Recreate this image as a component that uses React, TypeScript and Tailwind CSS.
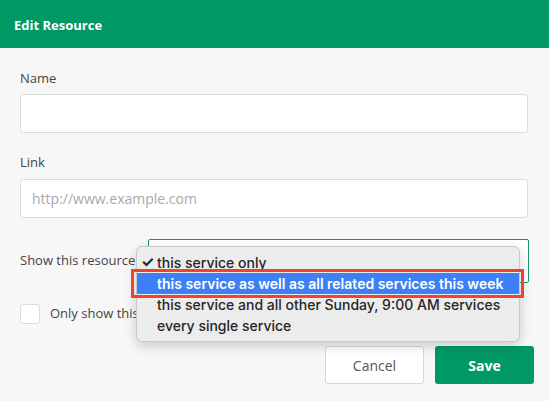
import React from 'react';

const options = [
  'this service only',
  'this service as well as all related services this week',
  'this service and all other Sunday, 9:00 AM services',
  'every single service',
];

const SelectMenu = () => {
  return (
    <div className="absolute left-[116px] top-[7px] w-[384px] rounded-[6px] border border-[#c9c9c9] bg-[#ececec] py-[5px] shadow-[0_4px_12px_rgba(0,0,0,0.18)] font-['Inter',sans-serif] text-[14px] text-[#262626]">
      {options.map((opt, i) => (
        <div
          key={opt}
          className={
            i === 1
              ? 'relative flex h-[21px] items-center bg-[#3d7ff6] pl-[20px] font-semibold text-white'
              : 'relative flex h-[21px] items-center pl-[20px] font-medium'
          }
        >
          {i === 0 && <span className="absolute left-[4px] text-[15px] font-bold">✓</span>}
          {opt}
          {i === 1 && (
            <span className="pointer-events-none absolute -left-[6px] -right-[5px] -top-[4px] -bottom-[4px] border-[3px] border-[#f1412f]" />
          )}
        </div>
      ))}
    </div>
  );
};

export default function App() {
  return (
    <div className="h-[401px] w-[549px] overflow-hidden bg-[#f7f7f7] font-['Open_Sans',sans-serif]">
      <header className="flex h-[48px] items-center bg-[#009966] px-[14px] pt-[3px]">
        <h1 className="text-[13px] font-bold text-white">Edit Resource</h1>
      </header>

      <div className="px-[20px] pt-[21px]">
        <label className="block text-[13px] leading-[18px] text-[#444]">Name</label>
        <div className="mt-[7px] h-[39px] w-[508px] rounded-[3px] border border-[#dcdcdc] bg-white" />

        <label className="mt-[20px] block text-[13px] leading-[18px] text-[#444]">Link</label>
        <div className="mt-[8px] flex h-[39px] w-[508px] items-center rounded-[3px] border border-[#dcdcdc] bg-white px-[11px] text-[14px] text-[#a9a9a9]">
          http://www.example.com
        </div>

        <div className="relative mt-[21px] flex h-[44px] items-center">
          <span className="w-[128px] text-[13px] text-[#444]">Show this resource</span>
          <div className="h-[44px] flex-1 rounded-[2px] border border-[#0f9a68] bg-white" />
          <SelectMenu />
        </div>

        <div className="mt-[21px] flex items-center gap-[10px]">
          <div className="h-[20px] w-[20px] rounded-[3px] border border-[#dcdcdc] bg-white" />
          <span className="whitespace-nowrap text-[13px] text-[#444]">Only show this</span>
        </div>

        <div className="mr-[-5px] mt-[22px] flex justify-end gap-[11px]">
          <button className="h-[38px] w-[99px] rounded-[3px] border border-[#d6d6d6] bg-white text-[14px] text-[#555]">
            Cancel
          </button>
          <button className="h-[38px] w-[99px] rounded-[3px] bg-[#009966] text-[14px] font-bold text-white">
            Save
          </button>
        </div>
      </div>
    </div>
  );
}
